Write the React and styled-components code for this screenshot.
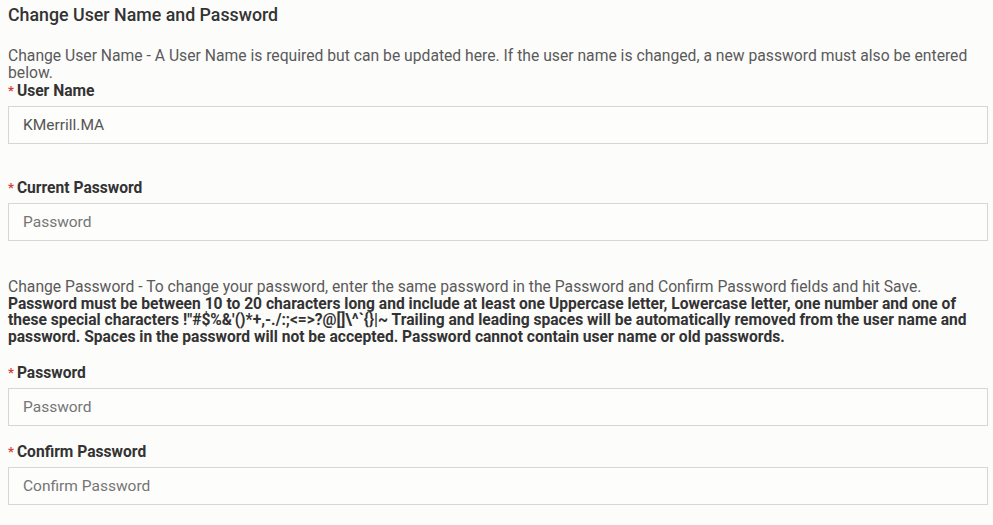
import React from "react";
import styled, { createGlobalStyle } from "styled-components";

const GlobalStyle = createGlobalStyle`
  html, body {
    margin: 0;
    padding: 0;
    background: #fcfcfb;
  }
  body {
    font-family: Roboto, "Liberation Sans", sans-serif;
    color: #555;
  }
`;

const Page = styled.div`
  padding: 5px 5px 0 8px;
  font-size: 15.6px;
`;

const Title = styled.h4`
  margin: 0 0 23px;
  font-size: 17.8px;
  line-height: 20px;
  font-weight: 500;
  color: #333;
`;

const Help = styled.p`
  margin: ${props => props.margin || "0"};
  font-size: 15.7px;
  line-height: 16.6px;
  color: #5a5a5a;
`;

const Rules = styled.strong`
  display: block;
  font-size: 15.6px;
  font-weight: 700;
  color: #333;
`;

const Field = styled.div`
  margin-bottom: ${props => props.gap || "16px"};
`;

const Label = styled.label`
  display: block;
  margin-bottom: 5px;
  font-size: 15.6px;
  line-height: 20px;
  font-weight: 700;
  color: #333;
`;

const Star = styled.span`
  color: #d43f3a;
  font-size: 13px;
  margin-right: 3px;
  vertical-align: 1px;
`;

const Input = styled.input`
  display: block;
  width: 100%;
  box-sizing: border-box;
  height: 38px;
  padding: 0 14px;
  border: 1px solid #d6d6d4;
  border-radius: 0;
  background: #fdfdfc;
  font-family: Roboto, "Liberation Sans", sans-serif;
  font-size: 15.5px;
  color: #555;

  ::placeholder {
    color: #9a9a9a;
  }
  :focus {
    outline: none;
  }
`;

const FormField = ({ label, gap, ...rest }) => (
  <Field gap={gap}>
    <Label>
      <Star>*</Star>
      {label}
    </Label>
    <Input {...rest} />
  </Field>
);

export default function App() {
  return (
    <Page>
      <GlobalStyle />
      <Title>Change User Name and Password</Title>
      <Help>
        Change User Name - A User Name is required but can be updated here. If the user name is changed, a new password
        must also be entered below.
      </Help>
      <FormField label="User Name" defaultValue="KMerrill.MA" gap="34px" />
      <FormField label="Current Password" placeholder="Password" type="password" gap="38px" />
      <Help margin="0 0 17px">
        Change Password - To change your password, enter the same password in the Password and Confirm Password fields
        and hit Save.
        <Rules>
          Password must be between 10 to 20 characters long and include at least one Uppercase letter, Lowercase
          letter, one number and one of these special characters !"#$%&'()*+,-./:;&lt;=&gt;?@[]\^`{"{}"}|~ Trailing
          and leading spaces will be automatically removed from the user name and password. Spaces in the password
          will not be accepted. Password cannot contain user name or old passwords.
        </Rules>
      </Help>
      <FormField label="Password" placeholder="Password" type="password" />
      <FormField label="Confirm Password" placeholder="Confirm Password" type="password" />
    </Page>
  );
}
